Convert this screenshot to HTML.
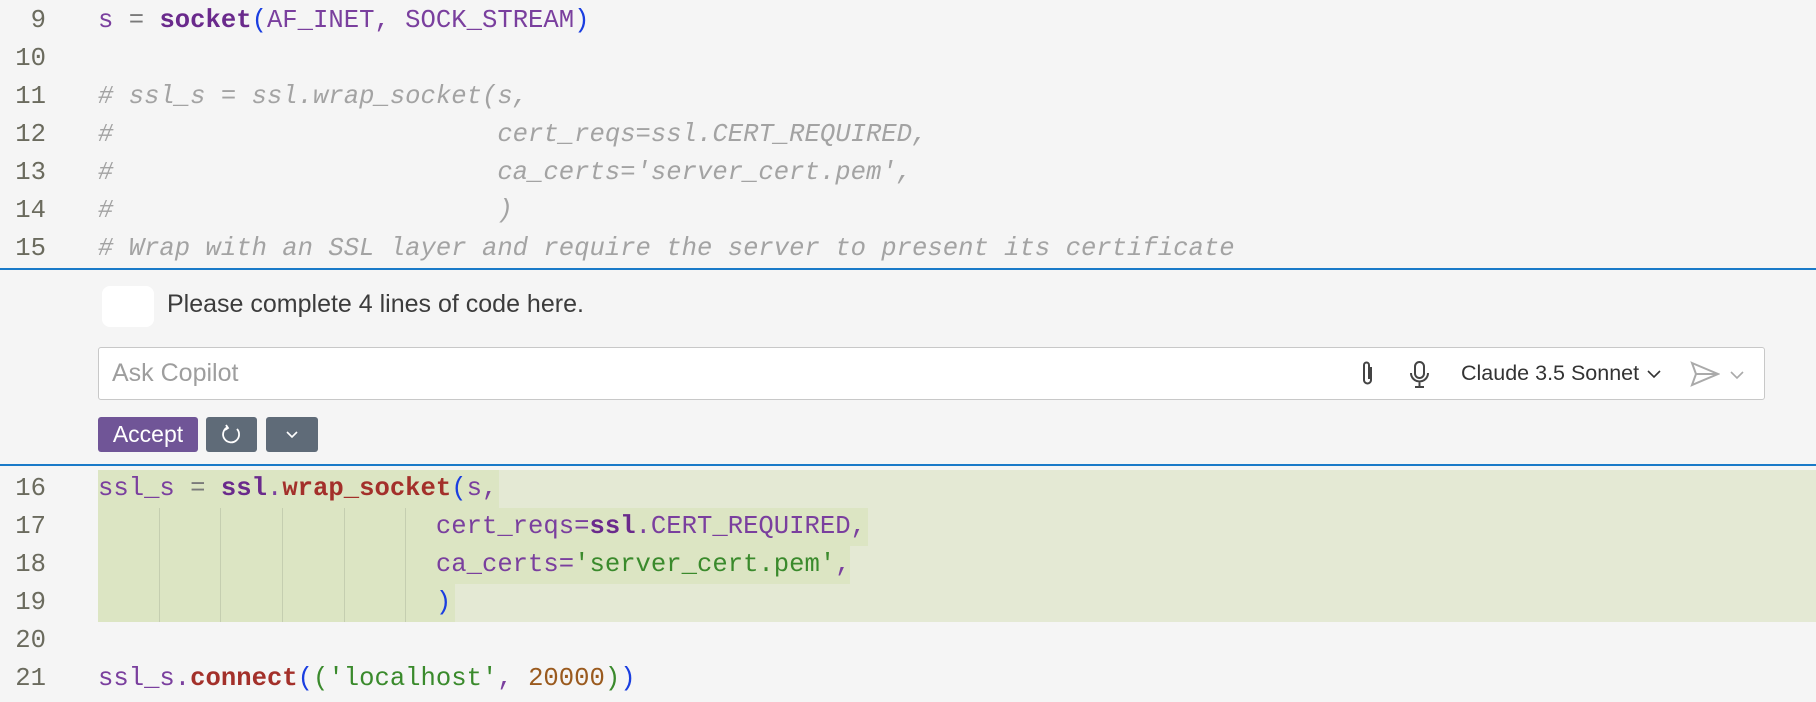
<!DOCTYPE html>
<html><head><meta charset="utf-8"><style>
body{margin:0;width:1816px;height:702px;background:#f5f5f5;overflow:hidden;position:relative;font-family:"Liberation Mono",monospace}
.ln{position:absolute;left:0;width:46px;text-align:right;font-size:25.6px;color:#6b6b5e;line-height:38px}
.cd{position:absolute;left:98px;font-size:25.6px;line-height:38px;white-space:pre;color:#7a3f9e}
.c{color:#a3a3a3;font-style:italic}
.b{font-weight:bold;color:#6a2a8c}
.r{font-weight:bold;color:#a3302a}
.p{color:#1a3ee0}
.g{color:#3a8a2c}
.n{color:#9a5a1e}
.o{color:#7a7a7a}
.hl{position:absolute;background:#dce5c3}
.sans{font-family:"Liberation Sans",sans-serif}
.btn{position:absolute;top:417px;height:35px;border-radius:3px;background:#5f6b78}
</style></head><body>
<div class="ln" style="top:2px">9</div><div class="cd" style="top:2px">s <span class="o">=</span> <span class="b">socket</span><span class="p">(</span>AF_INET, SOCK_STREAM<span class="p">)</span></div>
<div class="ln" style="top:40px">10</div>
<div class="ln" style="top:78px">11</div><div class="cd c" style="top:78px"># ssl_s = ssl.wrap_socket(s,</div>
<div class="ln" style="top:116px">12</div><div class="cd c" style="top:116px">#                         cert_reqs=ssl.CERT_REQUIRED,</div>
<div class="ln" style="top:154px">13</div><div class="cd c" style="top:154px">#                         ca_certs='server_cert.pem',</div>
<div class="ln" style="top:192px">14</div><div class="cd c" style="top:192px">#                         )</div>
<div class="ln" style="top:230px">15</div><div class="cd c" style="top:230px"># Wrap with an SSL layer and require the server to present its certificate</div>
<div style="position:absolute;left:0;top:268px;width:1816px;height:2px;background:#1a7ac8"></div>
<div style="position:absolute;left:102px;top:286px;width:52px;height:41px;background:#fff;border-radius:8px"></div>
<div class="sans" style="position:absolute;left:167px;top:290px;font-size:25px;color:#3c3c3c">Please complete 4 lines of code here.</div>
<div style="position:absolute;left:98px;top:347px;width:1665px;height:51px;background:#fff;border:1.5px solid #c8c8c8;border-radius:3px"></div>
<div class="sans" style="position:absolute;left:112px;top:359px;font-size:25px;color:#9e9e9e">Ask Copilot</div>
<svg style="position:absolute;left:1358px;top:360px" width="20" height="28" viewBox="0 0 20 28"><path d="M13 7v13a3.5 3.5 0 0 1-7 0V5a2.5 2.5 0 0 1 5 0v14" fill="none" stroke="#444" stroke-width="2"/><path d="M6 6v14" stroke="#444" stroke-width="2"/></svg>
<svg style="position:absolute;left:1408px;top:360px" width="24" height="30" viewBox="0 0 24 30"><rect x="7" y="2" width="9" height="16" rx="4.5" fill="none" stroke="#444" stroke-width="2"/><path d="M3 13a8.5 8.5 0 0 0 17 0M11.5 22v5M7 27h9" fill="none" stroke="#444" stroke-width="2"/></svg>
<div class="sans" style="position:absolute;left:1461px;top:361px;font-size:21.5px;color:#333">Claude 3.5 Sonnet</div>
<svg style="position:absolute;left:1646px;top:368px" width="16" height="12"><path d="M2 3l6 6 6-6" fill="none" stroke="#333" stroke-width="1.6"/></svg>
<svg style="position:absolute;left:1690px;top:360px" width="30" height="28"><path d="M2 3l26 11L2 25l4-11zM6 14h22" fill="none" stroke="#aaa" stroke-width="2"/></svg>
<svg style="position:absolute;left:1729px;top:369px" width="16" height="12"><path d="M2 3l6 6 6-6" fill="none" stroke="#aaa" stroke-width="1.6"/></svg>
<div class="btn sans" style="left:98px;width:100px;background:#705597;color:#fff;font-size:23px;line-height:35px;text-align:center">Accept</div>
<div class="btn" style="left:206px;width:51px"><svg width="51" height="35"><path d="M31 12a8 8 0 1 1-10-1.5M20 8l2 3-3 2" fill="none" stroke="#fff" stroke-width="1.8"/></svg></div>
<div class="btn" style="left:266px;width:52px"><svg width="52" height="35"><path d="M21 15l5 5 5-5" fill="none" stroke="#fff" stroke-width="1.6"/></svg></div>
<div style="position:absolute;left:0;top:464px;width:1816px;height:2px;background:#1a7ac8"></div>
<div class="hl" style="left:98px;top:470px;width:1718px;height:152px;background:#e4e9d4"></div>
<div class="hl" style="left:98px;top:470px;width:401px;height:38px"></div>
<div class="hl" style="left:98px;top:508px;width:770px;height:38px"></div>
<div class="hl" style="left:98px;top:546px;width:752px;height:38px"></div>
<div class="hl" style="left:98px;top:584px;width:357px;height:38px"></div>
<div style="position:absolute;left:159px;top:508px;width:1px;height:114px;background:#c5ceb0;box-shadow:61px 0 #c5ceb0,123px 0 #c5ceb0,185px 0 #c5ceb0,246px 0 #c5ceb0"></div>
<div class="ln" style="top:470px">16</div><div class="cd" style="top:470px">ssl_s <span class="o">=</span> <span class="b">ssl</span>.<span class="r">wrap_socket</span><span class="p">(</span>s,</div>
<div class="ln" style="top:508px">17</div><div class="cd" style="top:508px">                      cert_reqs=<span class="b">ssl</span>.CERT_REQUIRED,</div>
<div class="ln" style="top:546px">18</div><div class="cd" style="top:546px">                      ca_certs=<span class="g">'server_cert.pem'</span>,</div>
<div class="ln" style="top:584px">19</div><div class="cd" style="top:584px">                      <span class="p">)</span></div>
<div class="ln" style="top:622px">20</div>
<div class="ln" style="top:660px">21</div><div class="cd" style="top:660px">ssl_s.<span class="r">connect</span><span class="p">(</span><span class="g">(</span><span class="g">'localhost'</span>, <span class="n">20000</span><span class="g">)</span><span class="p">)</span></div>
</body></html>
